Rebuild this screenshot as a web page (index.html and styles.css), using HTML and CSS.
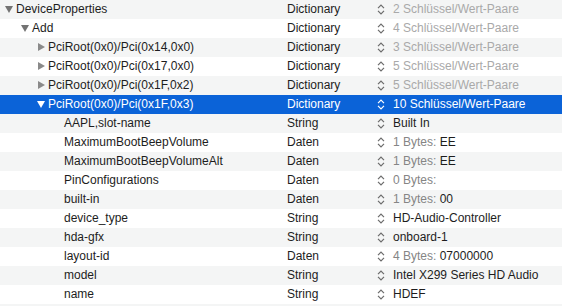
FILE: index.html
```html
<!DOCTYPE html>
<html lang="de">
<head>
    <meta charset="UTF-8">
    <meta name="viewport" content="width=device-width, initial-scale=1.0">
    <title>DeviceProperties</title>
    <link rel="stylesheet" href="styles.css">
</head>
<body>
    <div class="outline">
        <div class="row">
            <div class="key depth-0"><span class="toggle open"></span>DeviceProperties</div>
            <div class="type">Dictionary</div>
            <div class="value"><svg class="stepper" viewBox="0 0 8 11"><path d="M1 4.2 L4 1.2 L7 4.2 M1 6.8 L4 9.8 L7 6.8"/></svg><span class="muted">2 Schlüssel/Wert-Paare</span></div>
        </div>
        <div class="row">
            <div class="key depth-1"><span class="toggle open"></span>Add</div>
            <div class="type">Dictionary</div>
            <div class="value"><svg class="stepper" viewBox="0 0 8 11"><path d="M1 4.2 L4 1.2 L7 4.2 M1 6.8 L4 9.8 L7 6.8"/></svg><span class="muted">4 Schlüssel/Wert-Paare</span></div>
        </div>
        <div class="row">
            <div class="key depth-2"><span class="toggle closed"></span>PciRoot(0x0)/Pci(0x14,0x0)</div>
            <div class="type">Dictionary</div>
            <div class="value"><svg class="stepper" viewBox="0 0 8 11"><path d="M1 4.2 L4 1.2 L7 4.2 M1 6.8 L4 9.8 L7 6.8"/></svg><span class="muted">3 Schlüssel/Wert-Paare</span></div>
        </div>
        <div class="row">
            <div class="key depth-2"><span class="toggle closed"></span>PciRoot(0x0)/Pci(0x17,0x0)</div>
            <div class="type">Dictionary</div>
            <div class="value"><svg class="stepper" viewBox="0 0 8 11"><path d="M1 4.2 L4 1.2 L7 4.2 M1 6.8 L4 9.8 L7 6.8"/></svg><span class="muted">5 Schlüssel/Wert-Paare</span></div>
        </div>
        <div class="row">
            <div class="key depth-2"><span class="toggle closed"></span>PciRoot(0x0)/Pci(0x1F,0x2)</div>
            <div class="type">Dictionary</div>
            <div class="value"><svg class="stepper" viewBox="0 0 8 11"><path d="M1 4.2 L4 1.2 L7 4.2 M1 6.8 L4 9.8 L7 6.8"/></svg><span class="muted">5 Schlüssel/Wert-Paare</span></div>
        </div>
        <div class="row selected">
            <div class="key depth-2"><span class="toggle open"></span>PciRoot(0x0)/Pci(0x1F,0x3)</div>
            <div class="type">Dictionary</div>
            <div class="value"><svg class="stepper" viewBox="0 0 8 11"><path d="M1 4.2 L4 1.2 L7 4.2 M1 6.8 L4 9.8 L7 6.8"/></svg>10 Schlüssel/Wert-Paare</div>
        </div>
        <div class="row">
            <div class="key depth-3">AAPL,slot-name</div>
            <div class="type">String</div>
            <div class="value"><svg class="stepper" viewBox="0 0 8 11"><path d="M1 4.2 L4 1.2 L7 4.2 M1 6.8 L4 9.8 L7 6.8"/></svg>Built In</div>
        </div>
        <div class="row">
            <div class="key depth-3">MaximumBootBeepVolume</div>
            <div class="type">Daten</div>
            <div class="value"><svg class="stepper" viewBox="0 0 8 11"><path d="M1 4.2 L4 1.2 L7 4.2 M1 6.8 L4 9.8 L7 6.8"/></svg><span class="bytes">1 Bytes:</span>&nbsp;EE</div>
        </div>
        <div class="row">
            <div class="key depth-3">MaximumBootBeepVolumeAlt</div>
            <div class="type">Daten</div>
            <div class="value"><svg class="stepper" viewBox="0 0 8 11"><path d="M1 4.2 L4 1.2 L7 4.2 M1 6.8 L4 9.8 L7 6.8"/></svg><span class="bytes">1 Bytes:</span>&nbsp;EE</div>
        </div>
        <div class="row">
            <div class="key depth-3">PinConfigurations</div>
            <div class="type">Daten</div>
            <div class="value"><svg class="stepper" viewBox="0 0 8 11"><path d="M1 4.2 L4 1.2 L7 4.2 M1 6.8 L4 9.8 L7 6.8"/></svg><span class="bytes">0 Bytes:</span></div>
        </div>
        <div class="row">
            <div class="key depth-3">built-in</div>
            <div class="type">Daten</div>
            <div class="value"><svg class="stepper" viewBox="0 0 8 11"><path d="M1 4.2 L4 1.2 L7 4.2 M1 6.8 L4 9.8 L7 6.8"/></svg><span class="bytes">1 Bytes:</span>&nbsp;00</div>
        </div>
        <div class="row">
            <div class="key depth-3">device_type</div>
            <div class="type">String</div>
            <div class="value"><svg class="stepper" viewBox="0 0 8 11"><path d="M1 4.2 L4 1.2 L7 4.2 M1 6.8 L4 9.8 L7 6.8"/></svg>HD-Audio-Controller</div>
        </div>
        <div class="row">
            <div class="key depth-3">hda-gfx</div>
            <div class="type">String</div>
            <div class="value"><svg class="stepper" viewBox="0 0 8 11"><path d="M1 4.2 L4 1.2 L7 4.2 M1 6.8 L4 9.8 L7 6.8"/></svg>onboard-1</div>
        </div>
        <div class="row">
            <div class="key depth-3">layout-id</div>
            <div class="type">Daten</div>
            <div class="value"><svg class="stepper" viewBox="0 0 8 11"><path d="M1 4.2 L4 1.2 L7 4.2 M1 6.8 L4 9.8 L7 6.8"/></svg><span class="bytes">4 Bytes:</span>&nbsp;07000000</div>
        </div>
        <div class="row">
            <div class="key depth-3">model</div>
            <div class="type">String</div>
            <div class="value"><svg class="stepper" viewBox="0 0 8 11"><path d="M1 4.2 L4 1.2 L7 4.2 M1 6.8 L4 9.8 L7 6.8"/></svg>Intel X299 Series HD Audio</div>
        </div>
        <div class="row">
            <div class="key depth-3">name</div>
            <div class="type">String</div>
            <div class="value"><svg class="stepper" viewBox="0 0 8 11"><path d="M1 4.2 L4 1.2 L7 4.2 M1 6.8 L4 9.8 L7 6.8"/></svg>HDEF</div>
        </div>
        <div class="row empty"></div>
    </div>
</body>
</html>
```

FILE: styles.css
```css
body {
    margin: 0;
    padding: 0;
    background-color: #fff;
    font-family: "Liberation Sans", Arial, sans-serif;
    font-size: 12px;
    color: #1d1d1d;
    overflow: hidden;
}
.outline {
    display: flex;
    flex-direction: column;
}
.row {
    display: grid;
    grid-template-columns: 287px 90px 1fr;
    height: 19px;
    line-height: 19px;
    white-space: nowrap;
}
.row:nth-child(odd) {
    background-color: #f4f5f5;
}
.row.selected {
    background-color: #0b63d8;
    color: #fff;
}
.key {
    display: flex;
    align-items: center;
}
.depth-0 { padding-left: 0; }
.depth-1 { padding-left: 16px; }
.depth-2 { padding-left: 32px; }
.depth-3 { padding-left: 64px; }
.toggle {
    width: 16px;
    height: 19px;
    position: relative;
    flex-shrink: 0;
}
.toggle::before {
    content: "";
    position: absolute;
    width: 0;
    height: 0;
}
.toggle.open::before {
    left: 5px;
    top: 6px;
    border-left: 4px solid transparent;
    border-right: 4px solid transparent;
    border-top: 7px solid #737373;
}
.toggle.closed::before {
    left: 6px;
    top: 5px;
    border-top: 4px solid transparent;
    border-bottom: 4px solid transparent;
    border-left: 7px solid #8a8a8a;
}
.selected .toggle.open::before {
    border-top-color: #fff;
}
.value {
    display: flex;
    align-items: center;
}
.stepper {
    width: 8px;
    height: 11px;
    margin-right: 8px;
    flex-shrink: 0;
}
.stepper path {
    fill: none;
    stroke: #6b6b6b;
    stroke-width: 1.2;
}
.selected .stepper path {
    stroke: #fff;
}
.muted {
    color: #a9a9a9;
}
.bytes {
    color: #858585;
}
.row.empty {
    height: 2px;
}
```
